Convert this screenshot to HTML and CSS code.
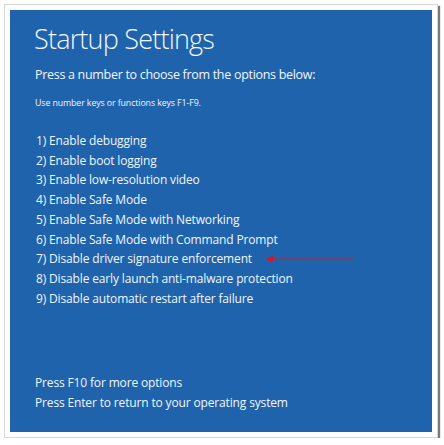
FILE: index.html
```html
<!DOCTYPE html>
<html>
<head>
<meta charset="utf-8">
<link rel="stylesheet" href="styles.css">
</head>
<body>
<div class="frame">
  <div class="screen">
    <h1 class="title">Startup Settings</h1>
    <p class="lead">Press a number to choose from the options below:</p>
    <p class="hint">Use number keys or functions keys F1-F9.</p>
    <ul class="options">
      <li>1) Enable debugging</li>
      <li>2) Enable boot logging</li>
      <li>3) Enable low-resolution video</li>
      <li>4) Enable Safe Mode</li>
      <li>5) Enable Safe Mode with Networking</li>
      <li>6) Enable Safe Mode with Command Prompt</li>
      <li class="marked">7) Disable driver signature enforcement<svg class="arrow" width="90" height="8" viewBox="0 0 90 8"><line x1="5" y1="4" x2="89" y2="4" stroke="#c8202c" stroke-width="1.2"/><path d="M0 4 L8 1 L8 7 Z" fill="#e0101c"/></svg></li>
      <li>8) Disable early launch anti-malware protection</li>
      <li>9) Disable automatic restart after failure</li>
    </ul>
    <div class="footer">
      <p>Press F10 for more options</p>
      <p>Press Enter to return to your operating system</p>
    </div>
  </div>
</div>
</body>
</html>
```
FILE: styles.css
```css
* { box-sizing: border-box; }
html, body { margin: 0; padding: 0; background: #fff; }
body { font-family: "Open Sans", "Noto Sans", sans-serif; }
.frame {
  margin: 4px 0 0 4px;
  width: 434px;
  height: 434px;
  border: 1px solid #d6d6d6;
  box-shadow: 2px 2px 1px #7a7a7a;
  padding: 5px 5px 5px 5px;
  background: #fff;
}
.screen {
  height: 100%;
  background: #1f63ad;
  color: #f2f6fb;
  padding: 12px 20px 0 24px;
  display: flex;
  flex-direction: column;
}
.title {
  margin: 0;
  font-weight: 300;
  font-size: 27px;
  letter-spacing: -0.8px;
  line-height: 34px;
}
.lead {
  margin: 10px 0 0 1px;
  font-size: 12.5px;
  letter-spacing: -0.3px;
  line-height: 18px;
}
.hint {
  margin: 13px 0 0 1px;
  font-size: 8.8px;
  letter-spacing: -0.1px;
  line-height: 12px;
}
.options {
  list-style: none;
  margin: 22px 0 0 2px;
  padding: 0;
  font-size: 12px;
  letter-spacing: -0.15px;
  line-height: 19.7px;
}
.marked { display: flex; align-items: center; }
.arrow { margin-left: 13px; }
.footer {
  margin: 65px 0 0 1px;
  font-size: 12px;
  letter-spacing: -0.15px;
  line-height: 19.7px;
}
.footer p { margin: 0; }
```
